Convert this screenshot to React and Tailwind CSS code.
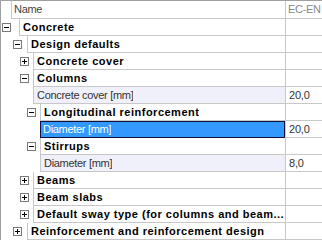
import React from 'react';

const rows = [
    { label: 'Concrete', bold: true, box: 'minus', boxPad: 'pl-[1px]', indent: 'w-[18px]' },
    { label: 'Design defaults', bold: true, box: 'minus', boxPad: 'pl-[12px]', indent: 'w-[26px]' },
    { label: 'Concrete cover', bold: true, box: 'plus', boxPad: 'pl-[19px]', indent: 'w-[32px]' },
    { label: 'Columns', bold: true, box: 'minus', boxPad: 'pl-[19px]', indent: 'w-[32px]' },
    { label: 'Concrete cover [mm]', value: '20,0', indent: 'w-[32px]' },
    { label: 'Longitudinal reinforcement', bold: true, box: 'minus', boxPad: 'pl-[26px]', indent: 'w-[39px]' },
    { label: 'Diameter [mm]', value: '20,0', selected: true, indent: 'w-[39px]' },
    { label: 'Stirrups', bold: true, box: 'minus', boxPad: 'pl-[26px]', indent: 'w-[39px]' },
    { label: 'Diameter [mm]', value: '8,0', indent: 'w-[39px]' },
    { label: 'Beams', bold: true, box: 'plus', boxPad: 'pl-[19px]', indent: 'w-[32px]' },
    { label: 'Beam slabs', bold: true, box: 'plus', boxPad: 'pl-[19px]', indent: 'w-[32px]' },
    { label: 'Default sway type (for columns and beam...', bold: true, box: 'plus', boxPad: 'pl-[19px]', indent: 'w-[32px]' },
    { label: 'Reinforcement and reinforcement design', bold: true, box: 'plus', boxPad: 'pl-[12px]', indent: 'w-[26px]' },
];

const Expander = ({ type }) => (
    <svg width="9" height="9" viewBox="0 0 9 9" className="block">
        <rect x="0.5" y="0.5" width="8" height="8" fill="#fff" stroke="#7a7a7a" />
        <path d="M2 4.5h5" stroke="#000" strokeWidth="1" />
        {type === 'plus' && <path d="M4.5 2v5" stroke="#000" strokeWidth="1" />}
    </svg>
);

const Row = ({ row }) => {
    let cell = 'flex-1 min-w-0 flex items-center pl-[3px] border-l border-b border-[#c8c8c8] ';
    let text = 'whitespace-nowrap overflow-hidden ';
    if (row.selected) {
        cell = 'flex-1 min-w-0 flex items-center pl-[2px] border border-[#10103a] bg-[#3399ff] ';
        text += 'text-white tracking-[-0.3px]';
    } else if (row.bold) {
        text += 'font-bold text-black tracking-[0.5px]';
    } else {
        cell += 'bg-[#f0f0fa]';
        text += 'text-[#333] tracking-[-0.3px]';
    }

    return (
        <div className="flex h-[17px]">
            <div className={'shrink-0 flex items-center ' + row.indent + ' ' + (row.boxPad || '')}>
                {row.box && <Expander type={row.box} />}
            </div>
            <div className={cell}>
                <span className={text}>{row.label}</span>
            </div>
            <div className="w-[37px] shrink-0 flex items-center pl-[3px] border-l border-b border-[#c8c8c8] text-[#333] tracking-[-0.2px] whitespace-nowrap">
                {row.value}
            </div>
        </div>
    );
};

export default function App() {
    return (
        <div className="w-[322px] h-[243px] bg-white overflow-hidden text-[11px] leading-none font-['Liberation_Sans',Arial,sans-serif]">
            <div className="border-l border-t border-[#a0a0a0]">
                {/* header */}
                <div className="flex h-[18px]">
                    <div className="w-[10px] shrink-0" />
                    <div className="flex-1 flex items-center pl-[2px] border-l border-b border-[#c8c8c8] text-[#444] tracking-[-0.3px]">
                        Name
                    </div>
                    <div className="w-[37px] shrink-0 flex items-center pl-[2px] border-l border-b border-[#c8c8c8] text-[#888] tracking-[-0.3px] whitespace-nowrap overflow-hidden">
                        EC-EN
                    </div>
                </div>
                {rows.map((row, i) => (
                    <Row key={i} row={row} />
                ))}
            </div>
        </div>
    );
}
